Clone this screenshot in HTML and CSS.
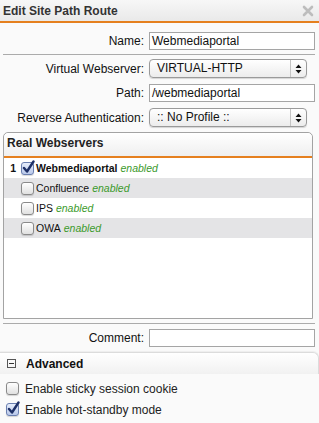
FILE: index.html
```html
<!DOCTYPE html>
<html>
<head>
    <title>Edit Site Path Route</title>
    <link rel="stylesheet" href="styles.css">
</head>
<body>
    <div class="titlebar">
        <span class="title">Edit Site Path Route</span>
        <svg class="close" width="12" height="12" viewBox="0 0 12 12">
            <path d="M2 2 L10 10 M10 2 L2 10" stroke="#bdbdbd" stroke-width="2.6" stroke-linecap="round"/>
        </svg>
    </div>

    <div class="row row-name">
        <label>Name:</label>
        <div class="textbox">Webmediaportal</div>
    </div>

    <div class="sep"></div>

    <div class="row row-first">
        <label>Virtual Webserver:</label>
        <div class="select">
            <span class="select-text">VIRTUAL-HTTP</span>
            <span class="select-arrows">
                <svg width="7" height="10" viewBox="0 0 7 10"><path d="M3.5 0.5 L6.5 4 L0.5 4 Z M3.5 9.5 L6.5 6 L0.5 6 Z" fill="#111"/></svg>
            </span>
        </div>
    </div>
    <div class="row">
        <label>Path:</label>
        <div class="textbox">/webmediaportal</div>
    </div>
    <div class="row">
        <label>Reverse Authentication:</label>
        <div class="select">
            <span class="select-text">:: No Profile ::</span>
            <span class="select-arrows">
                <svg width="7" height="10" viewBox="0 0 7 10"><path d="M3.5 0.5 L6.5 4 L0.5 4 Z M3.5 9.5 L6.5 6 L0.5 6 Z" fill="#111"/></svg>
            </span>
        </div>
    </div>

    <div class="panel">
        <div class="panel-head">Real Webservers</div>
        <div class="panel-body">
            <div class="server">
                <span class="num">1</span>
                <span class="box checked">
                    <svg width="15" height="15" viewBox="0 0 15 15"><path d="M3 8 L6 11.5 L12.5 1.5" stroke="#1d2f66" stroke-width="2.4" fill="none" stroke-linecap="round" stroke-linejoin="round"/></svg>
                </span>
                <span class="name bold">Webmediaportal</span>
                <span class="state">enabled</span>
            </div>
            <div class="server alt">
                <span class="num"></span>
                <span class="box"></span>
                <span class="name">Confluence</span>
                <span class="state">enabled</span>
            </div>
            <div class="server">
                <span class="num"></span>
                <span class="box"></span>
                <span class="name">IPS</span>
                <span class="state">enabled</span>
            </div>
            <div class="server alt">
                <span class="num"></span>
                <span class="box"></span>
                <span class="name">OWA</span>
                <span class="state">enabled</span>
            </div>
        </div>
    </div>

    <div class="sep sep-low"></div>

    <div class="row row-comment">
        <label>Comment:</label>
        <div class="textbox"></div>
    </div>

    <div class="advanced">
        <div class="advanced-head">
            <span class="toggle"></span>
            <span class="advanced-title">Advanced</span>
        </div>
        <div class="option">
            <span class="box"></span>
            Enable sticky session cookie
        </div>
        <div class="option">
            <span class="box checked">
                <svg width="15" height="15" viewBox="0 0 15 15"><path d="M3 8 L6 11.5 L12.5 1.5" stroke="#1d2f66" stroke-width="2.4" fill="none" stroke-linecap="round" stroke-linejoin="round"/></svg>
            </span>
            Enable hot-standby mode
        </div>
    </div>
</body>
</html>
```

FILE: styles.css
```css
body {
    margin: 0;
    background-color: #fafafa;
    font-family: "Liberation Sans", Arial, sans-serif;
    font-size: 12px;
    color: #111;
}

.titlebar {
    height: 21px;
    display: flex;
    align-items: center;
    justify-content: space-between;
    padding: 0 5px 0 3px;
    background: linear-gradient(#f7f7f7, #e9e9e9);
    border-bottom: 2px solid #e5801f;
}

.title {
    font-weight: bold;
    font-size: 12px;
    color: #333;
}

.close {
    display: block;
}

.row {
    display: grid;
    grid-template-columns: 144px 1fr;
    column-gap: 5px;
    align-items: center;
    padding-right: 4px;
    margin-top: 6px;
}

.row label {
    text-align: right;
}

.row-name {
    margin-top: 9px;
}

.row-first {
    margin-top: 4px;
}

.row-comment {
    margin-top: 5px;
}

.textbox {
    height: 16px;
    border: 1px solid #a5a5a5;
    background-color: #fff;
    padding: 0 2px;
    line-height: 16px;
    font-size: 12px;
}

.select {
    display: flex;
    height: 17px;
    margin-right: 8px;
    border: 1px solid #9a9a9a;
    border-radius: 4px;
    background: linear-gradient(#ffffff, #ececec);
    box-shadow: 0 1px 1px rgba(0, 0, 0, 0.15);
    line-height: 17px;
}

.select-text {
    flex: 1;
    padding-left: 7px;
}

.select-arrows {
    width: 15px;
    display: flex;
    align-items: center;
    justify-content: center;
    border-left: 1px solid #c4c4c4;
}

.sep {
    margin: 4px 4px 0 3px;
    border-top: 1px solid #ababab;
}

.panel {
    margin: 5px 6px 0 3px;
    border: 1px solid #a3a3a3;
    border-radius: 5px 5px 0 0;
    background-color: #fff;
}

.panel-head {
    height: 23px;
    line-height: 20px;
    padding-left: 3px;
    font-weight: bold;
    color: #222;
    background: linear-gradient(#ffffff, #efefef);
    border-bottom: 2px solid #e5801f;
    border-radius: 5px 5px 0 0;
}

.panel-body {
    height: 160px;
}

.server {
    display: flex;
    align-items: center;
    height: 20px;
    font-size: 10.5px;
}

.server.alt {
    background-color: #e4e4e6;
}

.server .num {
    width: 12px;
    text-align: right;
    font-weight: bold;
}

.server .box {
    margin-left: 5px;
}

.server .name {
    margin-left: 2px;
}

.bold {
    font-weight: bold;
}

.state {
    margin-left: 3px;
    color: #3b9a2b;
    font-style: italic;
}

.box {
    position: relative;
    display: inline-block;
    width: 11px;
    height: 11px;
    border: 1px solid #8a8a8a;
    border-radius: 3px;
    background: linear-gradient(#ffffff, #e0e0e0);
    box-shadow: 0 1px 1px rgba(0, 0, 0, 0.15);
    flex: none;
}

.box.checked {
    border-color: #6a7fb0;
    background: linear-gradient(#e6edfb, #b9c8ea);
}

.box svg {
    position: absolute;
    left: -1px;
    top: -3px;
}

.sep-low {
    margin-top: 4px;
}

.advanced {
    margin-top: 5px;
}

.advanced-head {
    display: flex;
    align-items: center;
    height: 21px;
    border-top: 1px solid #dcdcdc;
    border-right: 1px solid #dcdcdc;
    border-radius: 0 6px 0 0;
    background: linear-gradient(#ffffff, #f1f1f1);
    box-shadow: 0 -1px 1px rgba(0, 0, 0, 0.05);
}

.toggle {
    position: relative;
    width: 7px;
    height: 7px;
    margin-left: 7px;
    border: 1px solid #555;
}

.toggle::after {
    content: "";
    position: absolute;
    left: 1px;
    right: 1px;
    top: 3px;
    border-top: 1px solid #333;
}

.advanced-title {
    margin-left: 10px;
    font-weight: bold;
    font-size: 12px;
    color: #111;
}

.option {
    display: flex;
    align-items: center;
    gap: 6px;
    height: 21px;
    padding-left: 6px;
    color: #222;
}

.advanced-head + .option {
    margin-top: 4px;
}
```
